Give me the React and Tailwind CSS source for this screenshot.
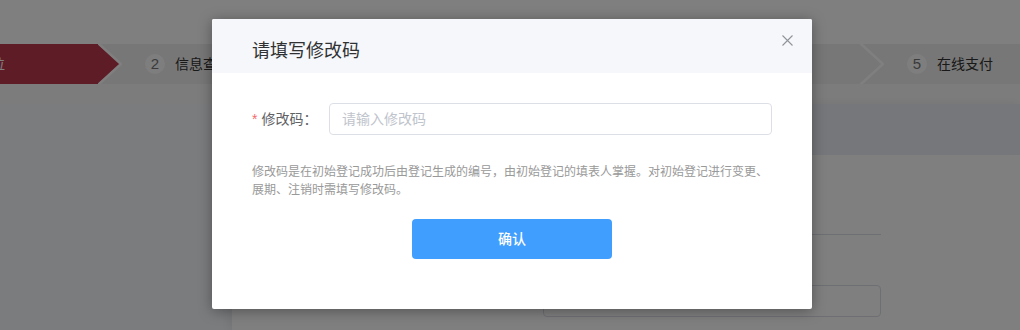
import { useState } from "react";

const steps = [
    { no: 1, label: "确认登记单位" },
    { no: 2, label: "信息查看" },
    { no: 3, label: "填写信息" },
    { no: 4, label: "确认提交" },
    { no: 5, label: "在线支付" },
];

function Chevron({ active }) {
    return (
        <svg width="24" height="40" viewBox="0 0 24 40" className="shrink-0 block">
            {active && <polygon points="0,0 22,20 0,40" fill="#bc384e" />}
            <polyline
                points="0,-1 23,20 0,41"
                fill="none"
                stroke="#ffffff"
                strokeWidth="2.5"
            />
        </svg>
    );
}

function StepsBar() {
    return (
        <div className="flex h-10 bg-[#eeeeee] overflow-hidden">
            {steps.map((s, i) => (
                <div
                    key={s.no}
                    className={`${i === 0 ? "ml-[-132px] " : ""}flex w-[254px] shrink-0 h-10`}
                >
                    <div
                        className={`${
                            i === 0 ? "bg-[#bc384e] text-white" : "text-[#333333]"
                        } flex flex-1 items-center pl-[23px]`}
                    >
                        <span className="w-5 h-5 rounded-full bg-[#fcfcfc] text-[#777777] text-[15px] leading-5 text-center">
                            {s.no}
                        </span>
                        <span className="ml-[10px] text-sm">{s.label}</span>
                    </div>
                    <Chevron active={i === 0} />
                </div>
            ))}
        </div>
    );
}

export default function App() {
    const [code, setCode] = useState("");

    return (
        <div
            className="relative w-[1020px] h-[330px] overflow-hidden bg-white"
            style={{ fontFamily: '"Liberation Sans", "Noto Sans CJK SC", sans-serif' }}
        >
            {/* pagina sotto */}
            <div className="h-[44px] bg-white" />
            <StepsBar />
            <div className="h-5 bg-[#f8f8f8]" />
            <div className="flex h-[226px]">
                <aside className="w-[232px] shrink-0 bg-[#f6f8fc]" />
                <main className="flex-1 bg-white shadow-[-3px_0_8px_rgba(0,0,0,0.06)]">
                    <div className="h-[51px] bg-[#edeff4]" />
                    <div className="pl-[311px] pr-[139px] pt-[79px]">
                        <div className="h-px bg-[#dcdfe6]" />
                        <div className="mt-[50px] h-8 rounded border border-[#dcdfe6]" />
                    </div>
                </main>
            </div>

            {/* dialog */}
            <div className="absolute inset-0 bg-black/50">
                <div className="ml-[212px] mt-[19px] w-[600px] h-[290px] bg-white rounded-[2px] shadow-[0_2px_14px_rgba(0,0,0,0.35)] overflow-hidden">
                    <div className="relative h-[54px] bg-[#f5f7fa] px-10 pt-5">
                        <h2 className="text-[18px] leading-6 text-[#303133]">请填写修改码</h2>
                        <svg
                            width="11"
                            height="11"
                            viewBox="0 0 11 11"
                            className="absolute top-[16px] right-[19px]"
                        >
                            <path d="M0.5 0.5 L10.5 10.5 M10.5 0.5 L0.5 10.5" stroke="#909399" strokeWidth="1.1" />
                        </svg>
                    </div>
                    <div className="px-10 pt-[30px]">
                        <div className="flex items-center h-8">
                            <label className="w-[77px] shrink-0 text-sm text-[#606266]">
                                <span className="text-[#f56c6c] mr-1">*</span>
                                修改码：
                            </label>
                            <input
                                value={code}
                                onChange={(e) => setCode(e.target.value)}
                                placeholder="请输入修改码"
                                className="flex-1 h-8 rounded border border-[#dcdfe6] px-3 text-sm text-[#606266] placeholder:text-[#c0c4cc] outline-none"
                            />
                        </div>
                        <p className="mt-[28px] text-xs leading-[18px] text-[#999999] whitespace-nowrap">
                            修改码是在初始登记成功后由登记生成的编号，由初始登记的填表人掌握。对初始登记进行变更、
                            <br />
                            展期、注销时需填写修改码。
                        </p>
                        <div className="flex justify-center mt-[20px]">
                            <button className="w-[200px] h-10 rounded bg-[#409eff] text-white text-sm font-medium">
                                确认
                            </button>
                        </div>
                    </div>
                </div>
            </div>
        </div>
    );
}
